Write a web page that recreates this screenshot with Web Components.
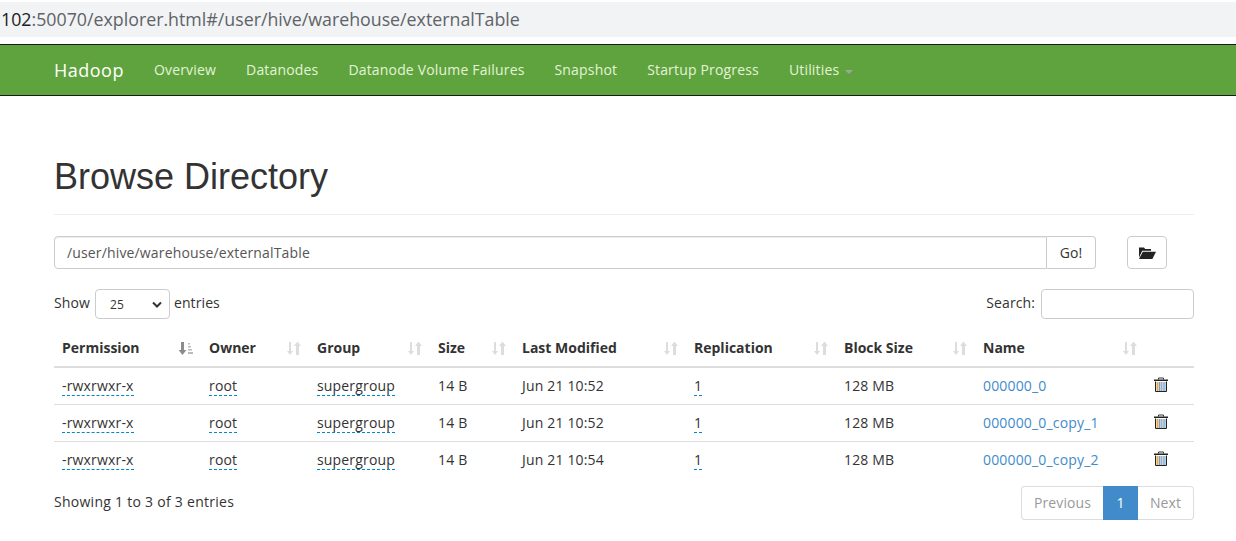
<!DOCTYPE html>
<html><head><meta charset="utf-8"><title>Browse Directory</title>
<style>
html,body{margin:0;padding:0;background:#fff}
body{font:14px/20px "Open Sans","Noto Sans",sans-serif;color:#333;height:541px;overflow:hidden}
</style></head><body>
<hd-urlbar></hd-urlbar>
<hd-navbar></hd-navbar>
<hd-page>
  <hd-pathbar path="/user/hive/warehouse/externalTable"></hd-pathbar>
  <hd-tools></hd-tools>
  <hd-table>
    <hd-row perm="-rwxrwxr-x" owner="root" group="supergroup" size="14 B" mod="Jun 21 10:52" rep="1" block="128 MB" name="000000_0"></hd-row>
    <hd-row perm="-rwxrwxr-x" owner="root" group="supergroup" size="14 B" mod="Jun 21 10:52" rep="1" block="128 MB" name="000000_0_copy_1"></hd-row>
    <hd-row perm="-rwxrwxr-x" owner="root" group="supergroup" size="14 B" mod="Jun 21 10:54" rep="1" block="128 MB" name="000000_0_copy_2"></hd-row>
  </hd-table>
  <hd-footer></hd-footer>
</hd-page>
<script>
const COLS='147px 108px 121px 84px 172px 150px 139px 170px 49px';
const FF='"Open Sans","Noto Sans",sans-serif';
function def(name,html){
  customElements.define(name,class extends HTMLElement{
    connectedCallback(){
      if(this.shadowRoot)return;
      const s=this.attachShadow({mode:'open'});
      s.innerHTML=typeof html==='function'?html(this):html;
    }
  });
}
def('hd-urlbar',`<style>
:host{display:block;padding-top:2px;height:44px;box-sizing:border-box}
div{height:35px;background:#f1f3f4;color:#5f6368;font:17.8px/35px ${FF};white-space:nowrap;padding-left:1px}
b{font-weight:400;color:#202124}
</style><div><b>102</b>:50070/explorer.html#/user/hive/warehouse/externalTable</div>`);
def('hd-navbar',`<style>
:host{display:flex;align-items:center;height:52px;box-sizing:border-box;background:#5fa33e;border-top:1px solid #1a1a1a;border-bottom:1px solid #1a1a1a;padding-left:54px;font:14px/20px ${FF};color:#e4f3d8;letter-spacing:.17px}
.brand{font:18px/20px ${FF};color:#fff;margin-right:30px;letter-spacing:.5px}
nav{display:flex;gap:30px}
.u{display:flex;align-items:center;gap:6px}
.c{width:0;height:0;border-left:4px solid transparent;border-right:4px solid transparent;border-top:4px solid #9aa89a;margin-top:3px}
</style><span class="brand">Hadoop</span><nav><span>Overview</span><span>Datanodes</span><span>Datanode Volume Failures</span><span>Snapshot</span><span>Startup Progress</span><span class="u">Utilities<i class="c"></i></span></nav>`);
def('hd-page',`<style>
:host{display:block;padding:0 42px 0 54px}
h1{font:400 36px/40px "Liberation Sans",Arial,sans-serif;margin:0;padding:61px 0 17px;color:#333;border-bottom:1px solid #eee}
</style><h1>Browse Directory</h1><slot></slot>`);
def('hd-pathbar',h=>`<style>
:host{display:flex;margin-top:21px;height:33px;font:14px/20px ${FF};color:#555;letter-spacing:.15px}
.i{flex:1;box-sizing:border-box;border:1px solid #ccc;border-radius:4px 0 0 4px;padding:6px 12px 4px;box-shadow:inset 0 1px 1px rgba(0,0,0,.075)}
.g{width:49px;box-sizing:border-box;border:1px solid #ccc;border-left:0;border-radius:0 4px 4px 0;text-align:center;padding:6px 0 4px;color:#333}
.f{width:40px;box-sizing:border-box;margin-left:31px;margin-right:27px;border:1px solid #ccc;border-radius:4px;display:flex;align-items:center;justify-content:center}
</style><div class="i">${h.getAttribute('path')}</div><div class="g">Go!</div><div class="f"><svg width="18" height="14" viewBox="0 0 18 14"><path fill="#222" d="M1 1.500h5l1.200 1.600H13v1.700H4.200L1 11.500z"/><path fill="#222" d="M4.800 5.800H18L14.400 13H1z"/></svg></div>`);
def('hd-tools',`<style>
:host{display:flex;justify-content:space-between;align-items:center;margin-top:19px;height:31px;font:14px/20px ${FF};color:#333;letter-spacing:.1px}
.l,.r{display:flex;align-items:center;gap:5px}
.l>span,.r>span{margin-bottom:2px}
.l>span:last-child{margin-left:-1px}
.s{box-sizing:border-box;width:75px;height:30px;border:1px solid #ccc;border-radius:4px;display:flex;align-items:center;justify-content:space-between;padding:2px 6px 0 14px;font-size:12px}
.q{box-sizing:border-box;width:153px;height:30px;border:1px solid #ccc;border-radius:4px;margin-left:1px}
</style><div class="l"><span>Show</span><div class="s">25<svg width="12" height="8" viewBox="0 0 12 8"><path d="M2 1.500l4 4 4-4" fill="none" stroke="#333" stroke-width="2"/></svg></div><span>entries</span></div><div class="r"><span>Search:</span><div class="q"></div></div>`);
const sortIco=(a)=>a?
 `<svg width="15" height="15" viewBox="0 0 15 15"><path fill="#8c8c8c" d="M3 1h3v8h2.400L4.500 14 .600 9H3z"/><path fill="#bbb" d="M10 2h2v1.500h-2zM10 5h3v1.500h-3zM10 8h4v1.500h-4zM10 11h5v2h-5z"/></svg>`:
 `<svg width="15" height="15" viewBox="0 0 15 15"><path fill="#ddd" d="M3 1h2v9h2l-3 4-3-4h2z"/><path fill="#ddd" d="M10 14V5H8l3.500-4.500L15 5h-2v9z"/></svg>`;
def('hd-table',h=>{
 const cols=[['Permission',1],['Owner'],['Group'],['Size'],['Last Modified'],['Replication'],['Block Size'],['Name']];
 return `<style>
:host{display:block;margin-top:11px;font:14px/20px ${FF}}
.h{display:grid;grid-template-columns:${COLS};height:38px;box-sizing:border-box;border-bottom:2px solid #ddd;align-items:center}
.h>div{display:flex;justify-content:space-between;align-items:center;padding:0 8px;font-weight:700;color:#333}
</style><div class="h">${cols.map(c=>`<div><span>${c[0]}</span>${sortIco(c[1])}</div>`).join('')}<div></div></div><slot></slot>`;});
def('hd-row',h=>{
 const g=k=>h.getAttribute(k);
 return `<style>
:host{display:grid;grid-template-columns:${COLS};height:37px;box-sizing:border-box;border-bottom:1px solid #ddd;align-items:center;font:14px/20px ${FF};color:#333;letter-spacing:.17px}
:host(:last-child){border-bottom:0;height:35px}
.c{padding:0 8px}
u{text-decoration:none;border-bottom:1px dashed #08c}
a{color:#428bca}
.t{padding-left:9px;display:flex;margin-top:-2px}
</style><div class="c"><u>${g('perm')}</u></div><div class="c"><u>${g('owner')}</u></div><div class="c"><u>${g('group')}</u></div><div class="c">${g('size')}</div><div class="c">${g('mod')}</div><div class="c"><u>${g('rep')}</u></div><div class="c">${g('block')}</div><div class="c"><a>${g('name')}</a></div><div class="t"><svg width="14" height="16" viewBox="0 0 14 16"><path d="M4.500 2.500V1h5v1.500" fill="none" stroke="#333"/><path fill="#222" d="M0 2.500h14V4H0z"/><path fill="none" stroke="#222" d="M1.500 4.500v10h11v-10"/><path fill="#e3a64f" d="M2.500 5h1.500v9H2.500z"/><path fill="#7a6a5a" d="M4.700 5h1v9h-1z"/><path fill="#6aa5dc" d="M6.500 5h1.300v9H6.500z"/><path fill="#888" d="M8.600 5h1v9h-1z"/><path fill="#6aa5dc" d="M10.300 5h1.200v9h-1.200z"/></svg></div>`;});
def('hd-footer',`<style>
:host{display:flex;justify-content:space-between;margin-top:9px;font:14px/20px ${FF};color:#333;letter-spacing:.27px}
.t{padding-top:6px}
.p{display:flex;height:34px;box-sizing:border-box;color:#999;letter-spacing:.1px}
.p span{box-sizing:border-box;border:1px solid #ddd;padding:6px 0;text-align:center}
.p span:first-child{width:82px;border-radius:4px 0 0 4px;border-right:0}
.p span:last-child{width:56px;border-radius:0 4px 4px 0;border-left:0}
.p .a{width:35px;background:#428bca;border-color:#428bca;color:#fff}
</style><div class="t">Showing 1 to 3 of 3 entries</div><div class="p"><span>Previous</span><span class="a">1</span><span>Next</span></div>`);
</script>
</body></html>
